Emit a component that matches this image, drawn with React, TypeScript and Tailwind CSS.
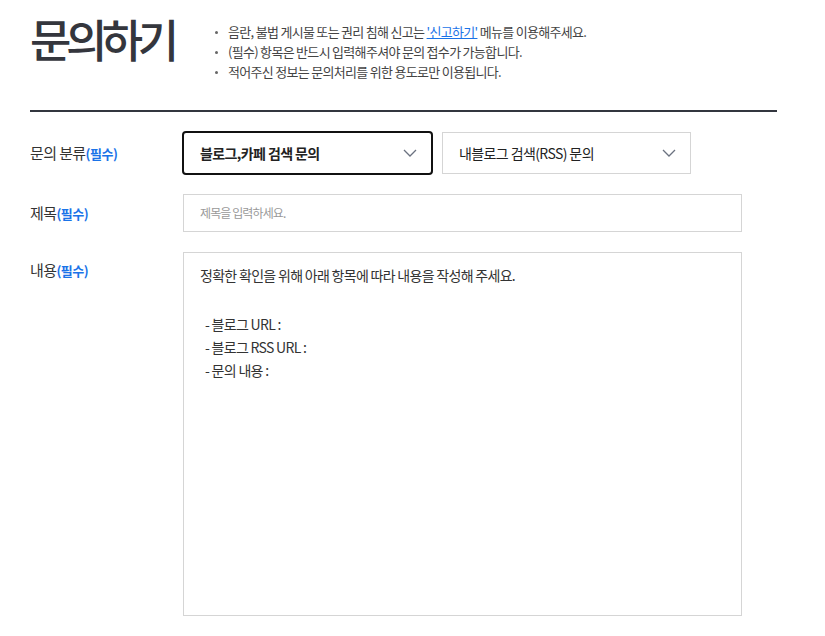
import React from "react";

const font = { fontFamily: '"Noto Sans CJK KR", "Noto Sans", sans-serif' };

function Chevron() {
  return (
    <svg width="14" height="8" viewBox="0 0 14 8" fill="none" className="shrink-0">
      <path d="M1 1 L7 7 L13 1" stroke="#6b7280" strokeWidth="1.3" />
    </svg>
  );
}

function Req() {
  return <span className="text-[13px] font-bold text-[#1a73e8] tracking-[-0.5px]">(필수)</span>;
}

export default function App() {
  return (
    <div className="w-[825px] min-h-[636px] bg-white text-[#333]" style={font}>
      <div className="ml-[30px] w-[747px]">
        <div className="flex h-[110px] items-start pt-[14px]">
          <h1 className="w-[185px] text-[45px] leading-[50px] font-medium tracking-[-5.5px] text-[#34363d]">문의하기</h1>
          <ul className="pt-[8px] text-[13px] leading-[20px] tracking-[-0.7px] text-[#444]">
            <li className="flex items-center">
              <span className="mr-[10px] inline-block h-[3px] w-[3px] rounded-full bg-[#666]" />
              <span>
                음란, 불법 게시물 또는 권리 침해 신고는{" "}
                <a className="text-[#1a73e8] underline">'신고하기'</a> 메뉴를 이용해주세요.
              </span>
            </li>
            <li className="flex items-center">
              <span className="mr-[10px] inline-block h-[3px] w-[3px] rounded-full bg-[#666]" />
              <span>(필수) 항목은 반드시 입력해주셔야 문의 접수가 가능합니다.</span>
            </li>
            <li className="flex items-center">
              <span className="mr-[10px] inline-block h-[3px] w-[3px] rounded-full bg-[#666]" />
              <span>적어주신 정보는 문의처리를 위한 용도로만 이용됩니다.</span>
            </li>
          </ul>
        </div>
        <div className="h-[2px] bg-[#33363f]" />

        <div className="mt-[19px] flex flex-col">
          <div className="flex items-center">
            <div className="w-[152px] text-[15px] tracking-[-0.6px]">
              문의 분류<Req />
            </div>
            <div className="flex items-center gap-[9px]">
              <div className="flex h-[44px] w-[251px] items-center justify-between rounded-[4px] border-2 border-[#111] pl-[16px] pr-[14px]">
                <span className="text-[14px] font-bold tracking-[-0.6px] text-[#222]">블로그,카페 검색 문의</span>
                <Chevron />
              </div>
              <div className="flex h-[42px] w-[249px] items-center justify-between border border-[#d5d5d5] pl-[16px] pr-[14px]">
                <span className="text-[14px] tracking-[-0.6px] text-[#222]">내블로그 검색(RSS) 문의</span>
                <Chevron />
              </div>
            </div>
          </div>

          <div className="mt-[19px] flex items-center">
            <div className="w-[153px] text-[15px] tracking-[-0.6px]">
              제목<Req />
            </div>
            <div className="flex h-[38px] w-[559px] items-center border border-[#d5d5d5] pl-[16px]">
              <span className="text-[12px] tracking-[-0.9px] text-[#999]">제목을 입력하세요.</span>
            </div>
          </div>

          <div className="mt-[20px] flex items-start">
            <div className="w-[153px] pt-[8px] text-[15px] leading-[20px] tracking-[-0.6px]">
              내용<Req />
            </div>
            <div className="h-[364px] w-[559px] border border-[#d5d5d5] px-[16px] pt-[11px] text-[14px] leading-[23px] tracking-[-0.7px] text-[#333]">
              <div>정확한 확인을 위해 아래 항목에 따라 내용을 작성해 주세요.</div>
              <div className="h-[26px]" />
              <div className="pl-[5px]">- 블로그 URL :</div>
              <div className="pl-[5px]">- 블로그 RSS URL :</div>
              <div className="pl-[5px]">- 문의 내용 :</div>
            </div>
          </div>
        </div>
      </div>
    </div>
  );
}
